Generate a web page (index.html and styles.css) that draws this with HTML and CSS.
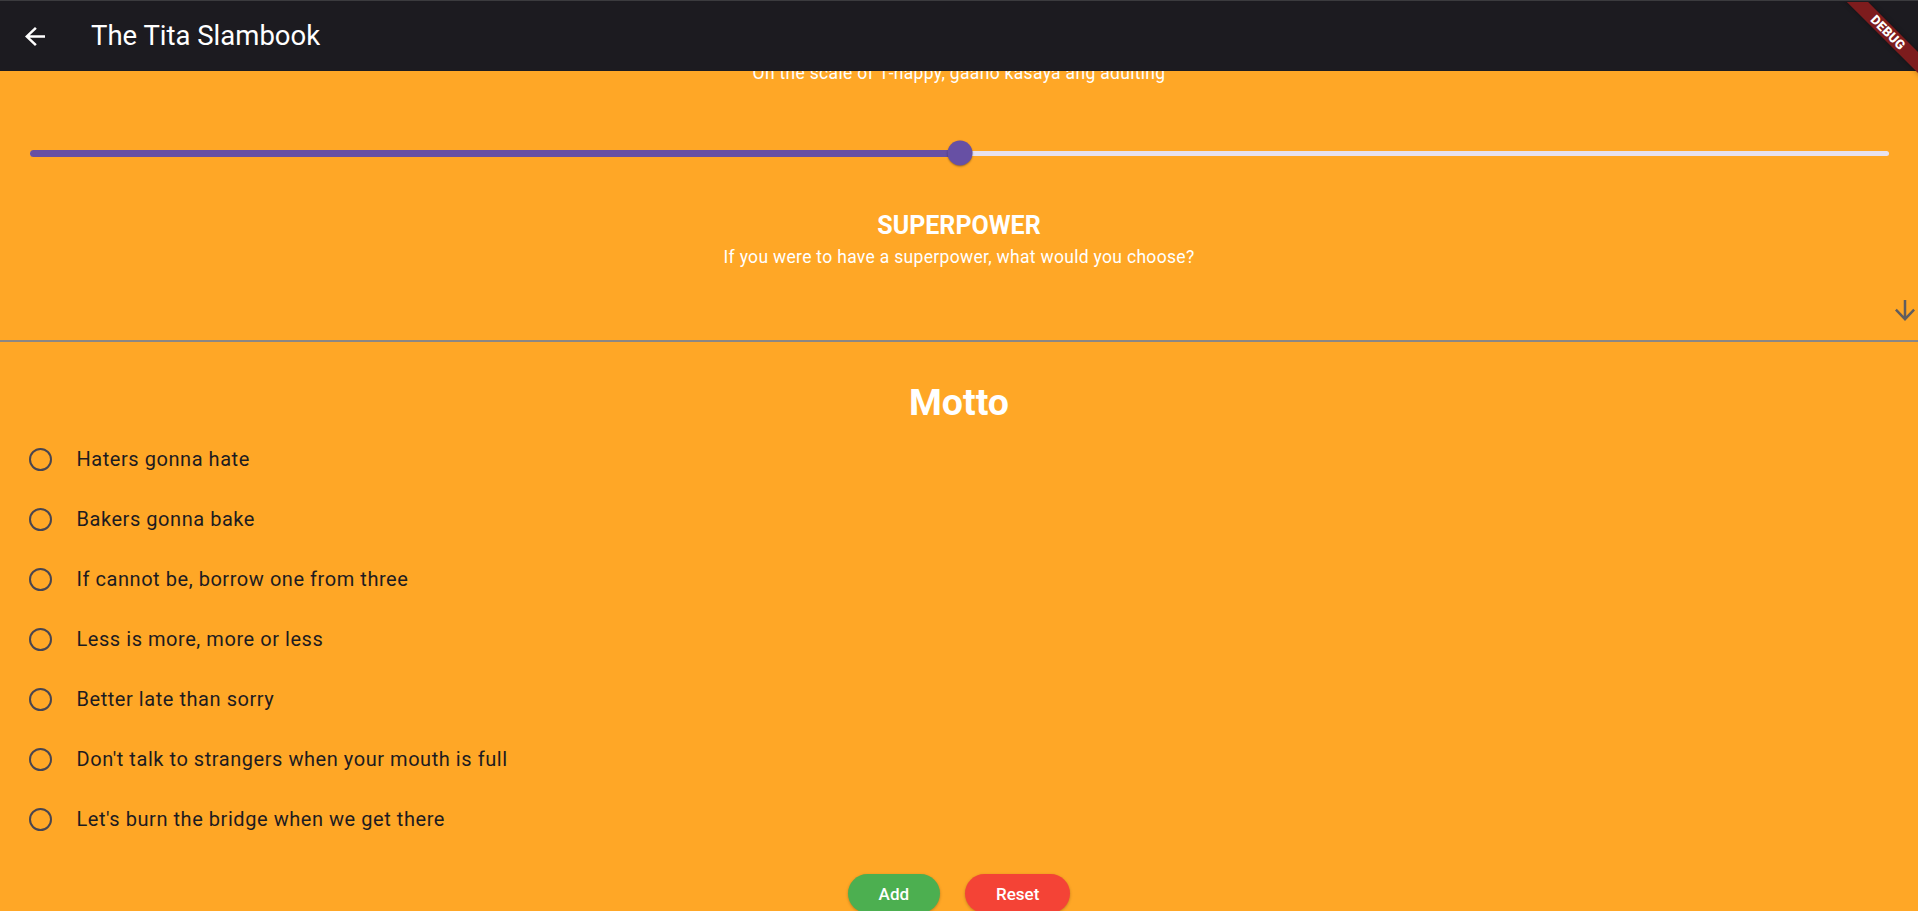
FILE: index.html
```html
<!DOCTYPE html>
<html lang="en">
<head>
<meta charset="utf-8">
<title>The Tita Slambook</title>
<link rel="stylesheet" href="styles.css">
</head>
<body>
<div class="window">
  <header class="appbar">
    <button class="icon-btn back" aria-label="Back">
      <svg width="20" height="19" viewBox="4 4 16 16" preserveAspectRatio="none"><path d="M20 11H7.83l5.59-5.59L12 4l-8 8 8 8 1.41-1.41L7.83 13H20v-2z" fill="currentColor"/></svg>
    </button>
    <h1 class="title">The Tita Slambook</h1>
  </header>
  <main class="content">
    <div class="scroller">
      <p class="q-caption">On the scale of 1-happy, gaano kasaya ang adulting</p>
      <div class="slider">
        <div class="track">
          <div class="track-active" style="width:50%"></div>
          <div class="thumb" style="left:50%"></div>
        </div>
      </div>
      <section class="q-head">
        <h2 class="q-title">SUPERPOWER</h2>
        <p class="q-sub">If you were to have a superpower, what would you choose?</p>
      </section>
      <div class="expand-row">
        <svg class="down" width="20" height="21" viewBox="4 4 16 16" preserveAspectRatio="none"><path d="M20 12l-1.41-1.41L13 16.17V4h-2v12.17l-5.58-5.59L4 12l8 8 8-8z" fill="currentColor"/></svg>
      </div>
      <hr class="divider">
      <section class="motto">
        <h2 class="motto-title">Motto</h2>
        <ul class="options">
          <li class="option"><span class="radio"></span><span class="label">Haters gonna hate</span></li>
          <li class="option"><span class="radio"></span><span class="label">Bakers gonna bake</span></li>
          <li class="option"><span class="radio"></span><span class="label">If cannot be, borrow one from three</span></li>
          <li class="option"><span class="radio"></span><span class="label">Less is more, more or less</span></li>
          <li class="option"><span class="radio"></span><span class="label">Better late than sorry</span></li>
          <li class="option"><span class="radio"></span><span class="label">Don't talk to strangers when your mouth is full</span></li>
          <li class="option"><span class="radio"></span><span class="label">Let's burn the bridge when we get there</span></li>
        </ul>
      </section>
      <div class="actions">
        <button class="btn btn-add">Add</button>
        <button class="btn btn-reset">Reset</button>
      </div>
    </div>
  </main>
  <div class="debug-banner"><div class="ribbon">DEBUG</div></div>
</div>
</body>
</html>
```
FILE: styles.css
```css
* { box-sizing: border-box; }
html, body {
  margin: 0;
  padding: 0;
  height: 911px;
  overflow: hidden;
  font-family: Roboto, "Noto Sans", "Liberation Sans", sans-serif;
}
.window {
  position: relative;
  height: 911px;
  border-top: 1px solid #3b3b3e;
  display: flex;
  flex-direction: column;
  background: #ffa726;
}
.appbar {
  height: 70px;
  flex: none;
  background: #1c1b20;
  display: flex;
  align-items: center;
  padding-left: 25px;
  position: relative;
  z-index: 2;
}
.icon-btn {
  border: 0;
  background: none;
  padding: 0;
  color: #ffffff;
  display: flex;
  align-items: center;
  justify-content: center;
}
.back { width: 20px; height: 19px; margin-top: 1px; }
.title {
  margin: 0 0 0 46px;
  font-size: 27.5px;
  font-weight: 400;
  color: #ffffff;
  line-height: 32px;
}
.content {
  flex: 1;
  overflow: hidden;
  background: #ffa726;
}
.q-caption {
  margin: -10px 0 0;
  text-align: center;
  font-size: 17.5px;
  letter-spacing: 0.31px;
  line-height: 25px;
  color: #ffffff;
}
.slider {
  margin-top: 37px;
  height: 60px;
  padding: 0 29px 0 30px;
  display: flex;
  align-items: center;
}
.track {
  position: relative;
  flex: 1;
  height: 5px;
  border-radius: 3px;
  background: #e8e2ee;
}
.track-active {
  position: absolute;
  left: 0;
  top: -1px;
  height: 7px;
  border-radius: 4px;
  background: #6750a4;
}
.thumb {
  position: absolute;
  top: 50%;
  width: 25px;
  height: 25px;
  border-radius: 50%;
  background: #6750a4;
  transform: translate(-50%, -50%);
  box-shadow: 0 1px 2px rgba(0,0,0,0.35);
}
.q-head { text-align: center; color: #ffffff; }
.q-title {
  margin: 27.5px 0 0;
  font-size: 25px;
  line-height: 30px;
  font-weight: 700;
}
.q-sub {
  margin: 4.5px 0 0;
  font-size: 17.5px;
  letter-spacing: 0.31px;
  line-height: 24px;
}
.expand-row {
  margin-top: 31px;
  display: flex;
  justify-content: flex-end;
  padding-right: 3px;
  color: #615d5e;
}
.down { display: block; }
.divider {
  margin: 19px 0 0;
  border: 0;
  height: 2px;
  background: #8b8785;
}
.motto-title {
  margin: 38px 0 0;
  text-align: center;
  font-size: 37.5px;
  line-height: 44px;
  font-weight: 700;
  color: #ffffff;
}
.options {
  list-style: none;
  margin: 5px 0 0;
  padding: 0;
}
.option {
  height: 60px;
  display: flex;
  align-items: center;
  padding-left: 28.5px;
}
.radio {
  width: 23px;
  height: 23px;
  border: 2.7px solid #49454f;
  border-radius: 50%;
  flex: none;
}
.label {
  margin-left: 25px;
  font-size: 20px;
  letter-spacing: 0.55px;
  color: #1d1b20;
}
.actions {
  margin-top: 25px;
  display: flex;
  justify-content: center;
  gap: 25px;
}
.btn {
  height: 39px;
  border: 0;
  border-radius: 20px;
  padding: 0 31px;
  font-family: Roboto, "Noto Sans", sans-serif;
  font-size: 17px;
  font-weight: 500;
  color: #ffffff;
  box-shadow: 0 1px 3px rgba(0,0,0,0.25);
}
.btn-add { background: #4caf50; }
.btn-reset { background: #f44336; }
.debug-banner {
  position: absolute;
  top: 1px;
  right: 0;
  width: 100px;
  height: 100px;
  overflow: hidden;
  pointer-events: none;
  z-index: 5;
}
.ribbon {
  position: absolute;
  left: 0;
  top: 22.5px;
  width: 140px;
  height: 15px;
  transform: rotate(45deg);
  background: #7d1c1d;
  color: #ffffff;
  font-size: 13px;
  font-weight: 900;
  line-height: 15px;
  text-align: center;
  letter-spacing: 0.2px;
  box-shadow: 0 0 5px rgba(0,0,0,0.35);
}
```
